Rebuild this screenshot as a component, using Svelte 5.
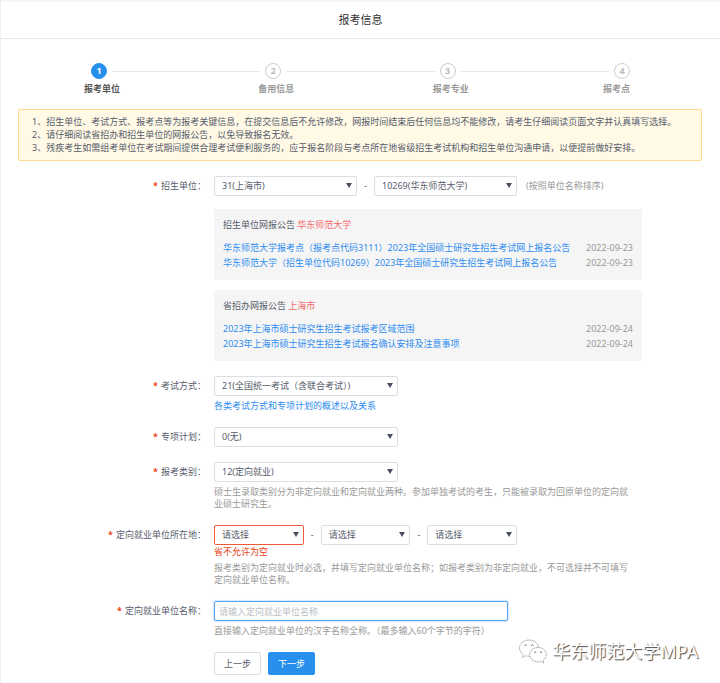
<script lang="ts">
interface Notice {
  title: string;
  date: string;
}

interface NoticeGroup {
  label: string;
  owner: string;
  items: Notice[];
}

const steps = ['报考单位', '备用信息', '报考专业', '报考点'];
const currentStep = 0;

const tips = [
  '1、招生单位、考试方式、报考点等为报考关键信息，在提交信息后不允许修改，网报时间结束后任何信息均不能修改，请考生仔细阅读页面文字并认真填写选择。',
  '2、请仔细阅读省招办和招生单位的网报公告，以免导致报名无效。',
  '3、残疾考生如需组考单位在考试期间提供合理考试便利服务的，应于报名阶段与考点所在地省级招生考试机构和招生单位沟通申请，以便提前做好安排。',
];

const noticeGroups: NoticeGroup[] = [
  {
    label: '招生单位网报公告',
    owner: '华东师范大学',
    items: [
      { title: '华东师范大学报考点（报考点代码3111）2023年全国硕士研究生招生考试网上报名公告', date: '2022-09-23' },
      { title: '华东师范大学（招生单位代码10269）2023年全国硕士研究生招生考试网上报名公告', date: '2022-09-23' },
    ],
  },
  {
    label: '省招办网报公告',
    owner: '上海市',
    items: [
      { title: '2023年上海市硕士研究生招生考试报考区域范围', date: '2022-09-24' },
      { title: '2023年上海市硕士研究生招生考试报名确认安排及注意事项', date: '2022-09-24' },
    ],
  },
];

const areaLevels = ['省', '市', '区县'];

const formData = $state({
  province: '31(上海市)',
  school: '10269(华东师范大学)',
  examType: '21(全国统一考试（含联合考试）)',
  plan: '0(无)',
  category: '12(定向就业)',
  area: ['请选择', '请选择', '请选择'],
  employer: '',
});

const areaError = $derived(formData.area[0] === '请选择' ? '省不允许为空' : '');
</script>

<div class="page">
  <header class="page-header">
    <h1>报考信息</h1>
  </header>

  <ol class="steps">
    {#each steps as step, i}
      <li class="step" class:active={i === currentStep}>
        <div class="step-head">
          <span class="step-number">{i + 1}</span>
          {#if i < steps.length - 1}
            <span class="step-line"></span>
          {/if}
        </div>
        <span class="step-title">{step}</span>
      </li>
    {/each}
  </ol>

  <div class="tips">
    {#each tips as tip}
      <p>{tip}</p>
    {/each}
  </div>

  <form onsubmit={(event) => event.preventDefault()}>
    <div class="form-item">
      <label class="form-label" for="province"><i>*</i>招生单位：</label>
      <div class="form-content">
        <div class="inline">
          <div class="select-group">
            <div class="select">
              <select id="province" bind:value={formData.province}>
                <option>31(上海市)</option>
              </select>
            </div>
            <span class="dash">-</span>
            <div class="select">
              <select aria-label="招生单位名称" bind:value={formData.school}>
                <option>10269(华东师范大学)</option>
              </select>
            </div>
          </div>
          <span class="note">(按照单位名称排序)</span>
        </div>

        <div class="notices">
          {#each noticeGroups as group}
            <section class="notice">
              <h2>{group.label} <em>{group.owner}</em></h2>
              <ul>
                {#each group.items as item}
                  <li>
                    <a href="#notice">{item.title}</a>
                    <time>{item.date}</time>
                  </li>
                {/each}
              </ul>
            </section>
          {/each}
        </div>
      </div>
    </div>

    <div class="form-item">
      <label class="form-label" for="exam-type"><i>*</i>考试方式：</label>
      <div class="form-content">
        <div class="select single">
          <select id="exam-type" bind:value={formData.examType}>
            <option>21(全国统一考试（含联合考试）)</option>
          </select>
        </div>
        <a class="more" href="#overview">各类考试方式和专项计划的概述以及关系</a>
      </div>
    </div>

    <div class="form-item">
      <label class="form-label" for="plan"><i>*</i>专项计划：</label>
      <div class="form-content">
        <div class="select single">
          <select id="plan" bind:value={formData.plan}>
            <option>0(无)</option>
          </select>
        </div>
      </div>
    </div>

    <div class="form-item">
      <label class="form-label" for="category"><i>*</i>报考类别：</label>
      <div class="form-content">
        <div class="select single">
          <select id="category" bind:value={formData.category}>
            <option>12(定向就业)</option>
          </select>
        </div>
        <p class="help">硕士生录取类别分为非定向就业和定向就业两种。参加单独考试的考生，只能被录取为回原单位的定向就业硕士研究生。</p>
      </div>
    </div>

    <div class="form-item">
      <label class="form-label" for="area-0"><i>*</i>定向就业单位所在地：</label>
      <div class="form-content">
        <div class="select-group">
          {#each areaLevels as level, i}
            {#if i > 0}
              <span class="dash">-</span>
            {/if}
            <div class="select" class:error={i === 0 && areaError}>
              <select id="area-{i}" aria-label={level} bind:value={formData.area[i]}>
                <option>请选择</option>
              </select>
            </div>
          {/each}
        </div>
        {#if areaError}
          <p class="error-message">{areaError}</p>
        {/if}
        <p class="help">报考类别为定向就业时必选，并填写定向就业单位名称；如报考类别为非定向就业，不可选择并不可填写定向就业单位名称。</p>
      </div>
    </div>

    <div class="form-item">
      <label class="form-label" for="employer"><i>*</i>定向就业单位名称：</label>
      <div class="form-content">
        <input
          id="employer"
          type="text"
          bind:value={formData.employer}
          class="form-input"
          placeholder="请输入定向就业单位名称"
        />
        <p class="help">直接输入定向就业单位的汉字名称全称。（最多输入60个字节的字符）</p>
      </div>
    </div>

    <div class="form-actions">
      <button type="button" class="prev-btn">上一步</button>
      <button type="submit" class="next-btn">下一步</button>
    </div>
  </form>

  <div class="watermark">
    <svg viewBox="0 0 30 26" width="30" height="26" aria-hidden="true">
      <g fill="#fff" stroke="#999" stroke-width="0.8" stroke-dasharray="2 0.6" stroke-linejoin="round">
        <path d="M11 2C5.500 2 1.500 5.500 1.500 10c0 2.800 1.500 5 3.800 6.500L4.300 19.500l3.500-1.800c1 .3 2 .5 3.200.5 5.500 0 9.500-3.700 9.500-8.200S16.500 2 11 2z" />
        <path d="M20 9.500c-4.800 0-8.300 3.200-8.300 7.200s3.500 7.200 8.300 7.200c1 0 1.900-.2 2.800-.5l3.200 1.700-.9-2.900c2-1.300 3.200-3.200 3.200-5.500 0-4-3.500-7.200-8.300-7.200z" />
      </g>
      <g fill="none" stroke="#777" stroke-width="1">
        <path d="M6.500 7.500q1.200-1.400 2.500 0M13 7.500q1.200-1.400 2.500 0" />
        <path d="M16 14.500q1.100-1.300 2.200 0M22 14.500q1.100-1.300 2.200 0" />
      </g>
    </svg>
    <span>华东师范大学MPA</span>
  </div>
</div>

<style>
  :global(body) {
    margin: 0;
    background: #fff;
  }

  .page {
    position: relative;
    box-sizing: border-box;
    padding-bottom: 8px;
    border-top: 2px solid #f5f5f5;
    border-left: 1px solid #f0f0f0;
    background: #fff;
    color: #565c6b;
    font: 9px/12px 'Noto Sans', 'Noto Sans CJK SC', sans-serif;
  }

  h1, h2, p, ul, ol {
    margin: 0;
    padding: 0;
    font-weight: normal;
  }

  ul, ol {
    list-style: none;
  }

  a {
    color: #2d8cf0;
    text-decoration: none;
  }

  .page-header {
    border-bottom: 1px solid #e6e6e6;
    text-align: center;
  }

  h1 {
    color: #333;
    font-size: 11px;
    line-height: 36px;
  }

  .steps {
    display: flex;
    padding: 24px 90px 0;
  }

  .step {
    display: flex;
    flex: 1;
    flex-direction: column;
    color: #999;
  }

  .step:last-child {
    flex: none;
    align-items: flex-end;
    width: 16px;
  }

  .step-head {
    display: flex;
    align-items: center;
    width: 100%;
  }

  .step-number {
    box-sizing: border-box;
    width: 16px;
    height: 16px;
    border: 1px solid #ccc;
    border-radius: 50%;
    color: #bbb;
    font-weight: bold;
    line-height: 14px;
    text-align: center;
  }

  .step-line {
    flex: 1;
    height: 1px;
    margin: 0 5px;
    background: #e6e6e6;
  }

  .step-title {
    margin-top: 4px;
    margin-left: -7px;
    font-weight: bold;
    white-space: nowrap;
  }

  .step.active {
    color: #555;
  }

  .step.active .step-number {
    border-color: #2790ec;
    background: #2790ec;
    color: #fff;
  }

  .tips {
    margin: 14px 18px 0 17px;
    padding: 5px 12px 6px 13px;
    border: 1px solid #ffdd8f;
    border-radius: 2px;
    background: #fff9e6;
    line-height: 13px;
  }

  form {
    display: flex;
    flex-direction: column;
    gap: 15px;
    padding-top: 15px;
  }

  .form-item {
    display: flex;
    gap: 8px;
  }

  .form-label {
    flex: none;
    width: 205px;
    line-height: 20px;
    text-align: right;
  }

  .form-label i {
    margin-right: 3px;
    color: #ed3f14;
    font-style: normal;
    font-weight: bold;
  }

  .form-content {
    flex: 1;
    min-width: 0;
    max-width: 428px;
  }

  .inline {
    display: flex;
    align-items: center;
    gap: 9px;
  }

  .select-group {
    display: flex;
    align-items: center;
    width: 303px;
  }

  .select {
    position: relative;
    flex: 1;
  }

  .select.single {
    width: 184px;
  }

  .select::after {
    content: '';
    position: absolute;
    top: 7px;
    right: 5px;
    border: 3px solid transparent;
    border-top: 5px solid #495060;
    border-bottom: 0;
    pointer-events: none;
  }

  select, .form-input {
    display: block;
    box-sizing: border-box;
    width: 100%;
    height: 20px;
    margin: 0;
    padding: 0 12px 0 7px;
    border: 1px solid #dddee1;
    border-radius: 2px;
    background: #fff;
    color: #565c6b;
    font: inherit;
    appearance: none;
  }

  .select.error select {
    border-color: #f0583a;
  }

  .dash {
    width: 17px;
    text-align: center;
  }

  .note {
    color: #999;
  }

  .notices {
    display: flex;
    flex-direction: column;
    gap: 10px;
    margin-top: 13px;
  }

  .notice {
    padding: 8px 9px 10px;
    background: #f5f5f5;
    line-height: 15px;
  }

  h2 {
    margin-bottom: 8px;
    font-size: 9px;
  }

  h2 em {
    color: #f5696c;
    font-style: normal;
  }

  .notice li {
    display: flex;
    justify-content: space-between;
  }

  time {
    color: #999;
  }

  .more {
    display: block;
    margin-top: 4px;
  }

  .help {
    max-width: 422px;
    margin-top: 4px;
    color: #999;
  }

  .error-message {
    margin-top: 1px;
    color: #ed3f14;
  }

  .form-input {
    max-width: 294px;
    padding: 0 4px;
    border-color: #57a3f3;
    box-shadow: 0 0 1px 1px rgba(45, 140, 240, 0.2);
  }

  .form-input:focus {
    outline: none;
  }

  .form-input::placeholder {
    color: #bbbec4;
  }

  .form-actions {
    display: flex;
    gap: 7px;
    padding-left: 213px;
  }

  button {
    width: 47px;
    height: 23px;
    padding: 0;
    border: 1px solid #dddee1;
    border-radius: 2px;
    background: #fff;
    color: #565c6b;
    font: inherit;
    cursor: pointer;
  }

  .next-btn {
    border-color: #2790ec;
    background: #2790ec;
    color: #fff;
  }

  .watermark {
    position: absolute;
    right: 22px;
    bottom: 19px;
    display: flex;
    align-items: center;
    gap: 4px;
    color: #fff;
    font-size: 18px;
    line-height: 26px;
    text-shadow: 1px 1px 1px #444;
  }
</style>
